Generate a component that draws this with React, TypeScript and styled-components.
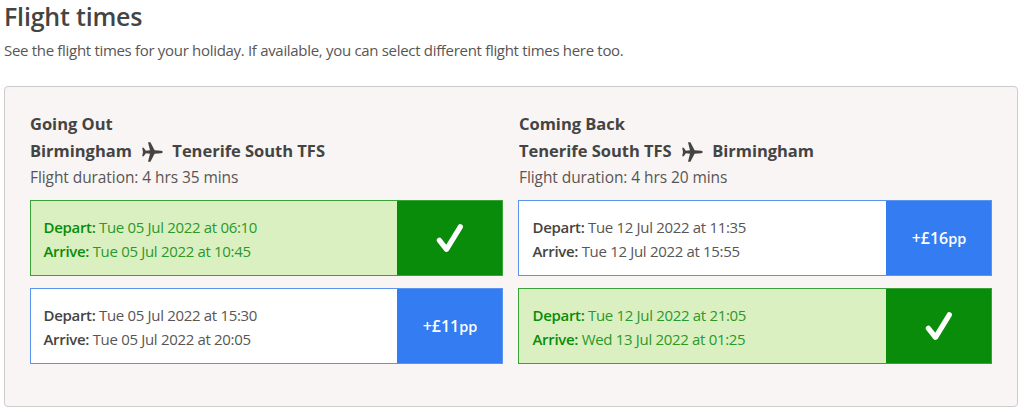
import React from "react"
import styled, { createGlobalStyle } from "styled-components"

const colors = {
  text: "#444443",
  body: "#585655",
  panel: "#f8f5f4",
  border: "#cccccc",
  green: "#098c09",
  greenBorder: "#3aa338",
  greenText: "#2b982a",
  paleGreen: "#dbf0c1",
  blue: "#337cf2",
  blueBorder: "#5a94f0",
  white: "#ffffff",
}

const GlobalStyle = createGlobalStyle`
  * {
    box-sizing: border-box;
  }

  body {
    margin: 0;
    background: ${colors.white};
    color: ${colors.body};
    font-family: "Open Sans", sans-serif;
    font-size: 15px;
  }
`

const Page = styled.main`
  height: 412px;
  padding: 0 6px 0 4px;
  overflow: hidden;
`

const Title = styled.h1`
  margin: 0;
  color: ${colors.text};
  font-size: 25px;
  font-weight: 600;
  line-height: 32px;
  letter-spacing: -0.2px;
`

const Intro = styled.p`
  margin: 7px 0 0;
  font-size: 15px;
  line-height: 23px;
  letter-spacing: -0.31px;
`

const Panel = styled.section`
  display: grid;
  grid-template-columns: 473px 474px;
  column-gap: 15px;
  height: 321px;
  margin-top: 24px;
  padding: 23px 25px;
  border: 1px solid ${colors.border};
  border-radius: 4px;
  background: ${colors.panel};
`

const LegHeader = styled.header<{ $inset: number }>`
  padding-left: ${props => props.$inset}px;
`

const Direction = styled.h2`
  margin: 0;
  color: ${colors.text};
  font-size: 16.5px;
  font-weight: 700;
  line-height: 28px;
  letter-spacing: -0.02px;
`

const Route = styled.div`
  display: flex;
  align-items: center;
  color: ${colors.text};
  font-size: 16.5px;
  font-weight: 700;
  line-height: 26px;
  letter-spacing: -0.02px;
`

const PlaneIcon = styled.svg`
  width: 21px;
  height: 20px;
  margin: 1px 9.5px 0 10px;
  fill: ${colors.text};
`

const Duration = styled.p`
  margin: 1px 0 11px;
  font-size: 15.5px;
  line-height: 24px;
  letter-spacing: -0.08px;
`

const Option = styled.div<{ $selected: boolean }>`
  display: flex;
  height: 76px;
  margin-bottom: 12px;
  border: 1px solid ${props => (props.$selected ? colors.greenBorder : colors.blueBorder)};
  background: ${props => (props.$selected ? colors.paleGreen : colors.white)};
  color: ${props => (props.$selected ? colors.greenText : colors.body)};
`

const Times = styled.div<{ $selected: boolean; $inset: number }>`
  flex: 1;
  padding: 14px 0 0 ${props => 12.5 + props.$inset}px;
  line-height: 24px;
  letter-spacing: -0.32px;

  strong {
    color: ${props => (props.$selected ? colors.green : colors.text)};
    font-weight: 600;
  }
`

const Action = styled.div<{ $selected: boolean }>`
  display: flex;
  align-items: center;
  justify-content: center;
  width: 105px;
  padding-left: 1px;
  background: ${props => (props.$selected ? colors.green : colors.blue)};
  color: ${colors.white};
  font-size: 16px;
  font-weight: 600;

  small {
    font-size: 14.5px;
  }
`

const TickIcon = styled.svg`
  width: 30px;
  height: 30px;
  fill: none;
  stroke: ${colors.white};
  stroke-width: 5.3;
  stroke-linecap: round;
  stroke-linejoin: round;
`

interface FlightOption {
  depart: string
  arrive: string
  price?: string
}

interface Leg {
  direction: string
  from: string
  to: string
  duration: string
  inset: number
  options: FlightOption[]
}

const legs: Leg[] = [
  {
    direction: "Going Out",
    from: "Birmingham",
    to: "Tenerife South TFS",
    duration: "4 hrs 35 mins",
    inset: 0,
    options: [
      { depart: "Tue 05 Jul 2022 at 06:10", arrive: "Tue 05 Jul 2022 at 10:45" },
      { depart: "Tue 05 Jul 2022 at 15:30", arrive: "Tue 05 Jul 2022 at 20:05", price: "+£11" },
    ],
  },
  {
    direction: "Coming Back",
    from: "Tenerife South TFS",
    to: "Birmingham",
    duration: "4 hrs 20 mins",
    inset: 1,
    options: [
      { depart: "Tue 12 Jul 2022 at 11:35", arrive: "Tue 12 Jul 2022 at 15:55", price: "+£16" },
      { depart: "Tue 12 Jul 2022 at 21:05", arrive: "Wed 13 Jul 2022 at 01:25" },
    ],
  },
]

const Plane = () => (
  <PlaneIcon viewBox="0 0 21 20">
    <path d="M6 .3h2.4l4.2 8 6.6.4q1.6.3 1.6 1.3t-1.6 1.3l-6.6.4-4.2 8H6l2-8-4.1-.4-2.2 2.9H.2L1 10 .2 5.8h1.5l2.2 2.9 4.1-.4z" />
  </PlaneIcon>
)

const FlightCard: React.FC<{ option: FlightOption; inset: number }> = ({ option, inset }) => {
  const selected = !option.price

  return (
    <Option $selected={selected}>
      <Times $selected={selected} $inset={inset}>
        <div>
          <strong>Depart:</strong> {option.depart}
        </div>
        <div>
          <strong>Arrive:</strong> {option.arrive}
        </div>
      </Times>
      <Action $selected={selected}>
        {selected ? (
          <TickIcon viewBox="0 0 30 30">
            <path d="M4.4 17.4l7.1 8.9L25.3 3.8" />
          </TickIcon>
        ) : (
          <span>
            {option.price}
            <small>pp</small>
          </span>
        )}
      </Action>
    </Option>
  )
}

export default function App() {
  return (
    <>
      <GlobalStyle />
      <Page>
        <Title>Flight times</Title>
        <Intro>See the flight times for your holiday. If available, you can select different flight times here too.</Intro>
        <Panel>
          {legs.map(leg => (
            <div key={leg.direction}>
              <LegHeader $inset={leg.inset}>
                <Direction>{leg.direction}</Direction>
                <Route>
                  {leg.from}
                  <Plane />
                  {leg.to}
                </Route>
                <Duration>Flight duration: {leg.duration}</Duration>
              </LegHeader>
              {leg.options.map(option => (
                <FlightCard key={option.depart} option={option} inset={leg.inset} />
              ))}
            </div>
          ))}
        </Panel>
      </Page>
    </>
  )
}
